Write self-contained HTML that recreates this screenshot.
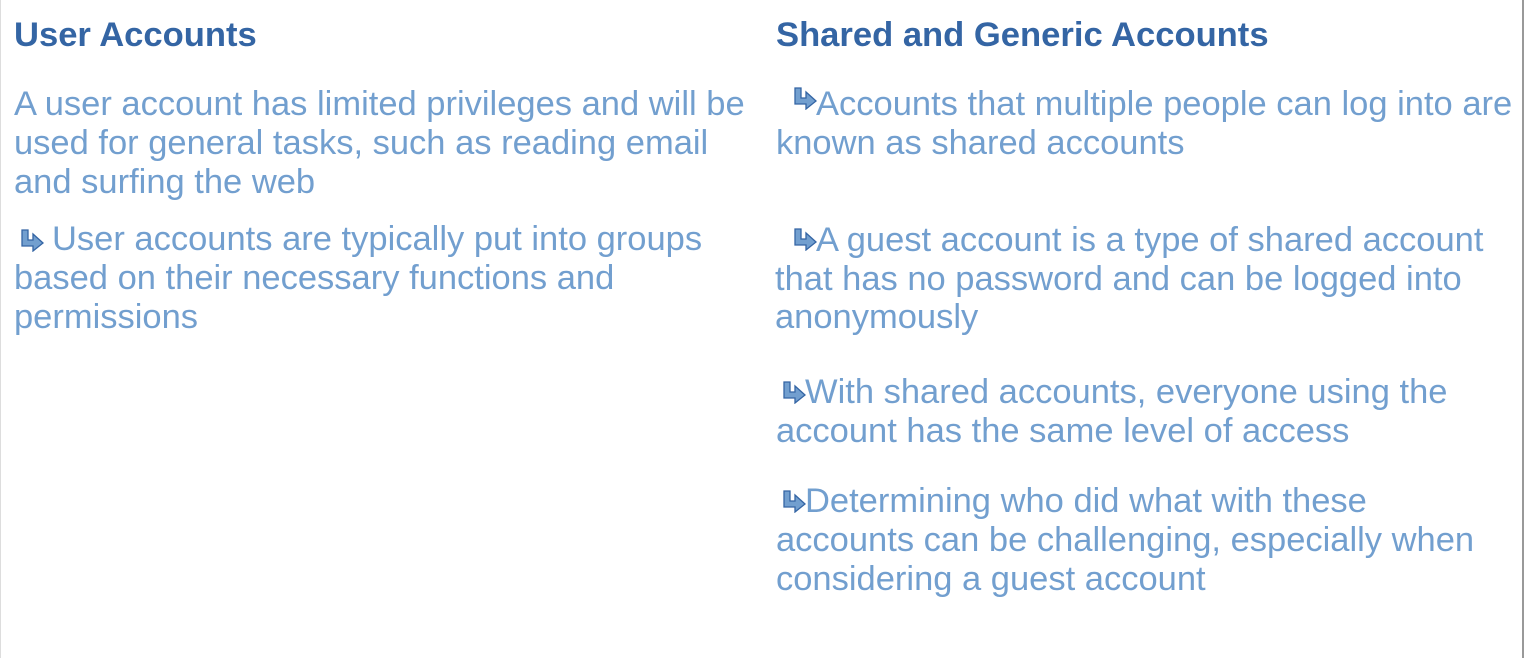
<!DOCTYPE html>
<html><head><meta charset="utf-8"><style>
html,body{margin:0;padding:0;background:#fff;}
body{width:1525px;height:658px;position:relative;overflow:hidden;font-family:"Liberation Sans",sans-serif;}
.l{position:absolute;white-space:nowrap;font-size:34.5px;line-height:39px;color:#729fcf;}
.h{position:absolute;white-space:nowrap;font-size:34.6px;line-height:39px;color:#3465a4;font-weight:bold;}
.b{position:absolute;width:24px;height:24px;}
</style></head><body>
<div style="position:absolute;left:0;top:0;width:1px;height:658px;background:#ddd"></div>
<div style="position:absolute;left:1522px;top:0;width:2px;height:658px;background:#999"></div>
<svg width="0" height="0" style="position:absolute"><defs><symbol id="ar" viewBox="0 0 24 24"><path d="M2 2H8V12H13V6L23 15L13 23V18H2Z" fill="#729fcf" stroke="#3465a4" stroke-width="1.3" stroke-linejoin="miter"/></symbol></defs></svg>
<div class="h" style="left:14px;top:16px">User Accounts</div>
<div class="h" style="left:776px;top:16px">Shared and Generic Accounts</div>

<div class="l" style="left:14px;top:85px">A user account has limited privileges and will be</div>
<div class="l" style="left:14px;top:124px">used for general tasks, such as reading email</div>
<div class="l" style="left:14px;top:163px">and surfing the web</div>
<svg class="b" style="left:20px;top:228px"><use href="#ar"/></svg>
<div class="l" style="left:52px;top:220px">User accounts are typically put into groups</div>
<div class="l" style="left:14px;top:259px">based on their necessary functions and</div>
<div class="l" style="left:14px;top:298px">permissions</div>

<svg class="b" style="left:793px;top:86px"><use href="#ar"/></svg>
<div class="l" style="left:816px;top:85px">Accounts that multiple people can log into are</div>
<div class="l" style="left:776px;top:124px">known as shared accounts</div>
<svg class="b" style="left:793px;top:227px"><use href="#ar"/></svg>
<div class="l" style="left:816px;top:221px">A guest account is a type of shared account</div>
<div class="l" style="left:775px;top:260px">that has no password and can be logged into</div>
<div class="l" style="left:775px;top:298px">anonymously</div>
<svg class="b" style="left:782px;top:380px"><use href="#ar"/></svg>
<div class="l" style="left:805px;top:373px">With shared accounts, everyone using the</div>
<div class="l" style="left:776px;top:412px">account has the same level of access</div>
<svg class="b" style="left:782px;top:489px"><use href="#ar"/></svg>
<div class="l" style="left:805px;top:482px">Determining who did what with these</div>
<div class="l" style="left:776px;top:521px">accounts can be challenging, especially when</div>
<div class="l" style="left:776px;top:560px">considering a guest account</div>
</body></html>
